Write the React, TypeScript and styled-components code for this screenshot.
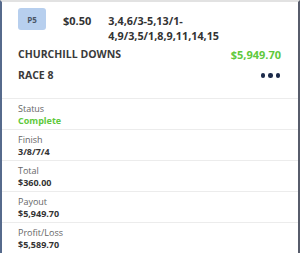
import styled, { createGlobalStyle } from 'styled-components';
import React from 'react';

const GlobalStyle = createGlobalStyle`
  html, body {
    margin: 0;
    padding: 0;
    background: #fff;
  }
  body {
    font-family: "Open Sans", "Liberation Sans", sans-serif;
  }
`

const Card = styled.div`
  width: 300px;
  height: 253px;
  box-sizing: border-box;
  border-top: 2px solid #e2e2e2;
  border-left: 2px solid #566a8c;
  border-right: 2px solid #575c6b;
  background: #fff;
  overflow: hidden;
  color: #333;
`

const Header = styled.div`
  padding: 6px 17px 0 16px;
  height: 97px;
  box-sizing: border-box;
  border-bottom: 1px solid #ececec;
`

const TopRow = styled.div`
  display: flex;
  align-items: flex-start;
`

const Badge = styled.div`
  width: 28px;
  height: 22px;
  border-radius: 3px;
  background: #b7cfee;
  color: #4a5566;
  font-size: 8px;
  font-weight: 700;
  display: flex;
  align-items: center;
  justify-content: center;
  flex-shrink: 0;
`

const Amount = styled.div`
  font-size: 11px;
  font-weight: 700;
  line-height: 15px;
  margin: 5px 0 0 17px;
  white-space: nowrap;
`

const Picks = styled.div`
  font-size: 10.8px;
  font-weight: 700;
  line-height: 15px;
  margin: 5px 0 0 17px;
  white-space: nowrap;
`

const Line = styled.div<{ $top: number }>`
  display: flex;
  align-items: center;
  justify-content: space-between;
  margin-top: ${p => p.$top}px;
  font-size: 10.5px;
  font-weight: 700;
  line-height: 15px;
  color: #3a3a3a;
`

const Money = styled.span`
  color: #5fc93c;
  font-size: 11px;
`

const Dots = styled.div`
  display: flex;
  gap: 3px;
  margin-right: 1px;
  > span {
    width: 4.5px;
    height: 4.5px;
    border-radius: 50%;
    background: #1c2a4a;
  }
`

const Row = styled.div`
  padding: 4px 16px 0;
  height: 31px;
  box-sizing: border-box;
  border-bottom: 1px solid #ececec;
  font-size: 9px;
  line-height: 11.5px;
`

const Label = styled.div`
  color: #666;
`

const Value = styled.div<{ $green?: boolean }>`
  font-weight: 700;
  color: ${p => (p.$green ? '#5fc93c' : '#333')};
`

const rows = [
  { label: 'Status', value: 'Complete', green: true },
  { label: 'Finish', value: '3/8/7/4' },
  { label: 'Total', value: '$360.00' },
  { label: 'Payout', value: '$5,949.70' },
  { label: 'Profit/Loss', value: '$5,589.70' },
]

function App() {
  return (
    <>
      <GlobalStyle />
      <Card>
        <Header>
          <TopRow>
            <Badge>P5</Badge>
            <Amount>$0.50</Amount>
            <Picks>3,4,6/3-5,13/1-<br />4,9/3,5/1,8,9,11,14,15</Picks>
          </TopRow>
          <Line $top={4}>
            <span>CHURCHILL DOWNS</span>
            <Money>$5,949.70</Money>
          </Line>
          <Line $top={6}>
            <span>RACE 8</span>
            <Dots><span /><span /><span /></Dots>
          </Line>
        </Header>
        {rows.map(r => (
          <Row key={r.label}>
            <Label>{r.label}</Label>
            <Value $green={r.green}>{r.value}</Value>
          </Row>
        ))}
      </Card>
    </>
  );
}

export default App;
